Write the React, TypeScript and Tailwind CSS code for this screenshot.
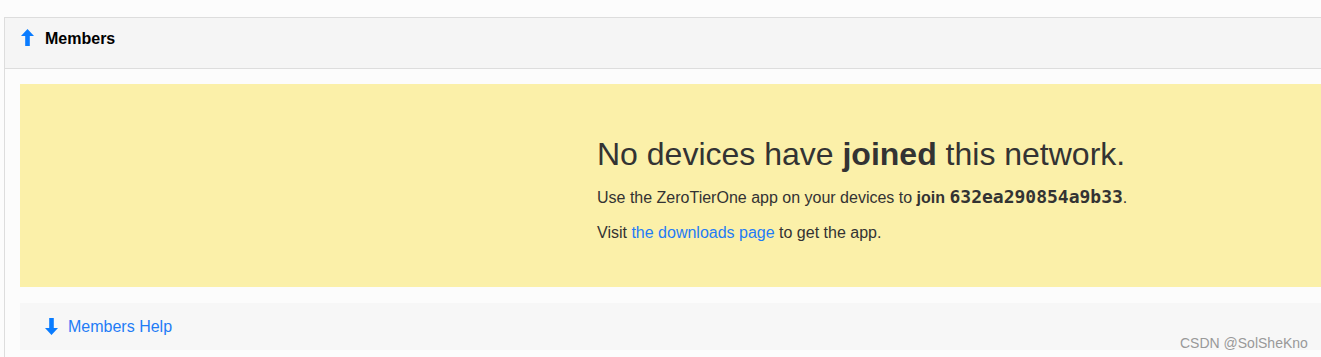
function Arrow({ down = false }: { down?: boolean }) {
  return (
    <svg width="13" height="17" viewBox="0 0 13 17" className={down ? 'rotate-180 shrink-0' : 'shrink-0'}>
      <polygon points="6.5,0 13,7 8.8,7 8.8,17 4.2,17 4.2,7 0,7" fill="#0a7cff" />
    </svg>
  );
}

function App() {
  return (
    <div className="relative bg-[#fcfcfc] h-[357px] w-[1321px] overflow-hidden pt-[17px] pl-[4px] font-['Liberation_Sans',Arial,sans-serif] text-[#333]">
      <div className="w-[1400px] border-l border-t border-[#dddddd]">
        <div className="h-[51px] bg-[#f5f5f5] border-b border-[#dddddd] flex items-start pt-[11px] pl-[16px]">
          <Arrow />
          <span className="font-bold text-[16px] leading-[18px] text-black ml-[11px] mt-[1px]">Members</span>
        </div>

        <div className="p-[15px] pr-0">
          <div className="bg-[#fbf0a9] h-[203px] pl-[577px] pt-[50px]">
            <h2 className="text-[32px] leading-[40px] mb-[13px]">
              No devices have <b>joined</b> this network.
            </h2>
            <p className="text-[16px] leading-[20px] mb-[15px]">
              Use the ZeroTierOne app on your devices to <b>join</b>{' '}
              <code className="font-['DejaVu_Sans_Mono',monospace] font-bold text-[18px]">632ea290854a9b33</code>.
            </p>
            <p className="text-[16px] leading-[20px]">
              Visit <span className="text-[#1f7cf6]">the downloads page</span> to get the app.
            </p>
          </div>

          <div className="mt-[16px] h-[47px] bg-[#f7f7f7] flex items-center pl-[25px]">
            <Arrow down />
            <span className="text-[16px] text-[#1f7cf6] ml-[10px]">Members Help</span>
          </div>
        </div>
      </div>

      <div className="absolute left-[1180px] top-[333px] text-[14px] text-[#999]">CSDN @SolSheKno</div>
    </div>
  );
}

export default App;
